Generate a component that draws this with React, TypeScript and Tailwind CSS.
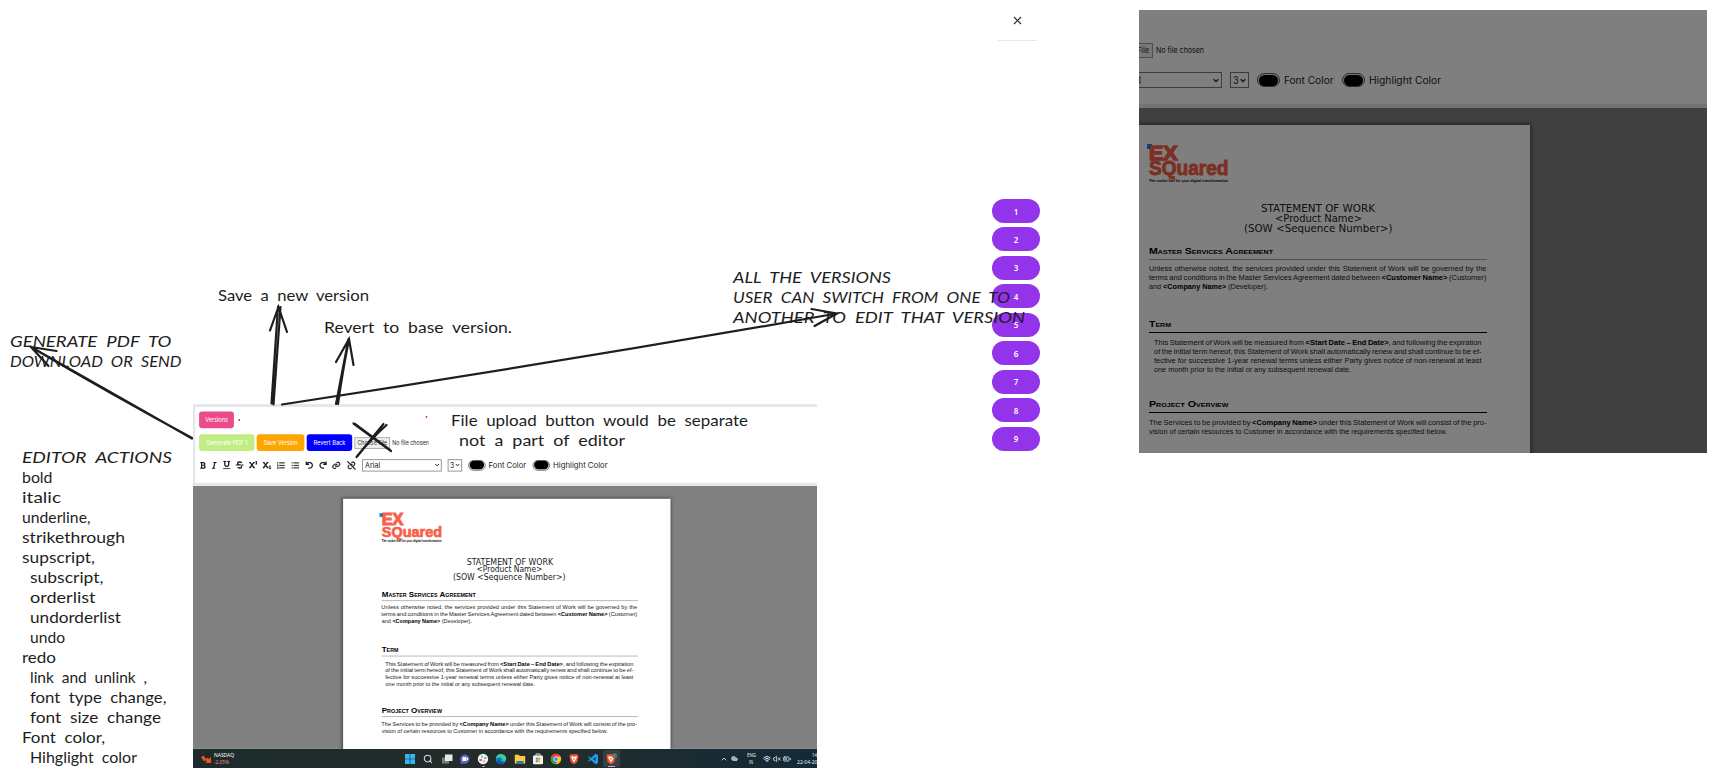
import { useLayoutEffect, useRef, type ReactNode } from "react";
import { X, Search, ChevronUp, Wifi, VolumeX, BatteryMedium, Cloud } from "lucide-react";
import {
  FaBold,
  FaItalic,
  FaUnderline,
  FaStrikethrough,
  FaSuperscript,
  FaSubscript,
} from "react-icons/fa";
import { AiOutlineOrderedList, AiOutlineUnorderedList } from "react-icons/ai";
import { BiLink, BiUnlink } from "react-icons/bi";

type FitProps = { w: number; children: ReactNode; className?: string; words?: boolean };

/* A single line of text set to an exact width, by scaling it or by spacing its words. */
function Fit({ w, children, className = "", words = false }: FitProps) {
  const ref = useRef<HTMLSpanElement>(null);
  useLayoutEffect(() => {
    const el = ref.current;
    if (!el) return;
    const natural = parseFloat(getComputedStyle(el).width);
    if (words) {
      const gaps = (el.textContent ?? "").split(" ").length - 1;
      el.style.wordSpacing = `${(w - natural) / gaps}px`;
    } else {
      el.style.transform = `scaleX(${w / natural})`;
    }
  }, [w, words]);
  return (
    <span className="block whitespace-nowrap" style={{ width: w }}>
      <span ref={ref} className={`inline-block origin-left whitespace-pre align-top ${className}`}>
        {children}
      </span>
    </span>
  );
}

function Heading({ w, children, dark }: { w: number; children: ReactNode; dark?: boolean }) {
  return (
    <div className={`h-4 w-[338px] border-b ${dark ? "border-black" : "border-[#a3a3a3]"}`}>
      <Fit w={w} className="text-[9px] leading-[14px] font-bold text-black [font-variant:small-caps]">
        {children}
      </Fit>
    </div>
  );
}

function SowPage({ dark }: { dark?: boolean }) {
  return (
    <div className="h-[400px] w-[432px] shrink-0 bg-white pt-[19px] pl-[51px] font-['Liberation_Sans',sans-serif] text-[7.5px] leading-[9.1px] text-[#222] shadow-[0_0_4px_1px_rgba(0,0,0,0.5)]">
      <div className="relative h-[59px] text-[#f8604a]">
        <div className="absolute top-0 -left-[2.5px] size-[5px] bg-[#0b84ff]" />
        <div>
          <Fit w={28.5} className="text-[21px] leading-[17px] font-bold [-webkit-text-stroke:1.5px_#f8604a]">EX</Fit>
        </div>
        <Fit w={79.5} className="-mt-[0.5px] text-[19.5px] leading-[15px] font-bold [-webkit-text-stroke:0.9px_#f8604a]">SQuared</Fit>
        <div className="pt-[2px]">
          <Fit w={79} className="text-[4.2px] leading-[6px] font-bold text-black">
            The rocket fuel for your digital transformation
          </Fit>
        </div>
      </div>
      <div className="flex w-[338px] flex-col items-center font-['DejaVu_Sans',sans-serif] text-[10.6px] leading-[10.1px] text-[#222]">
        <Fit w={114}>STATEMENT OF WORK</Fit>
        <Fit w={87}>{"<Product Name>"}</Fit>
        <Fit w={148.5}>{"(SOW <Sequence Number>)"}</Fit>
      </div>
      <div className="mt-[11px]">
        <Heading w={124}>Master Services Agreement</Heading>
      </div>
      <div className="mt-1">
        <Fit w={337.5} words>Unless otherwise noted, the services provided under this Statement of Work will be governed by the</Fit>
        <Fit w={337.5} words>
          terms and conditions in the Master Services Agreement dated between <b className="text-black">{"<Customer Name>"}</b> (Customer)
        </Fit>
        <Fit w={119}>
          and <b className="text-black">{"<Company Name>"}</b> (Developer).
        </Fit>
      </div>
      <div className="mt-[25.6px]">
        <Heading w={22} dark={dark}>Term</Heading>
      </div>
      <div className="mt-[4.5px] pl-[5px]">
        <Fit w={327.5} words>
          This Statement of Work will be measured from <b className="text-black">{"<Start Date – End Date>"}</b>, and following the expiration
        </Fit>
        <Fit w={327.5} words>of the initial term hereof, this Statement of Work shall automatically renew and shall continue to be ef-</Fit>
        <Fit w={327.5} words>fective for successive 1-year renewal terms unless either Party gives notice of non-renewal at least</Fit>
        <Fit w={197}>one month prior to the initial or any subsequent renewal date.</Fit>
      </div>
      <div className="mt-[23px]">
        <Heading w={79.5} dark={dark}>Project Overview</Heading>
      </div>
      <div className="mt-[4.5px]">
        <Fit w={337.5} words>
          The Services to be provided by <b className="text-black">{"<Company Name>"}</b> under this Statement of Work will consist of the pro-
        </Fit>
        <Fit w={298}>vision of certain resources to Customer in accordance with the requirements specified below.</Fit>
      </div>
    </div>
  );
}

function ColorPill() {
  return (
    <div className="flex h-[14px] w-[23px] items-center justify-center rounded-full border border-[#555568] bg-[#e9e9ed]">
      <div className="h-[11px] w-[19px] rounded-full bg-black" />
    </div>
  );
}

function Chevron() {
  return (
    <svg className="h-[5px] w-[6px]" viewBox="0 0 6 5" fill="none" stroke="#222" strokeWidth="1.3">
      <path d="M.7 1.2 3 3.6l2.3-2.4" />
    </svg>
  );
}

function UndoIcon({ className }: { className: string }) {
  return (
    <svg className={className} viewBox="0 0 12 12" fill="none" stroke="currentColor" strokeWidth="1.8">
      <path d="M1.5 1v4.200h4.200M1.800 5C3.200 2.500 6 1.800 8.200 2.900 10.500 4 11 7 9.400 9 8.300 10.400 6.500 10.900 4.500 10.400" />
    </svg>
  );
}

function Toolbar({ wide }: { wide?: boolean }) {
  return (
    <div
      className={`h-[108px] border-y-4 border-l-[3px] border-[#e5e7eb] bg-white pt-[6px] font-[Inter,sans-serif] text-[#1c1c28] ${wide ? "pl-[3.5px]" : "pl-[5px]"}`}
    >
      <div className="flex h-[22px]">
        <div className="flex w-[46px] items-center justify-center rounded-[4px] bg-[#ec4b8b] text-[8px] text-white">
          <Fit w={30}>Versions</Fit>
        </div>
        {!wide && (
          <>
            <div className="mt-[10px] ml-[6px] size-[2px] bg-red-600" />
            <div className="mt-[6px] ml-[245px] size-[2px] bg-red-600" />
          </>
        )}
      </div>
      <div className={`flex h-[22px] items-center text-[8px] text-white ${wide ? "mt-[7px] mb-[11px]" : "mt-2 mb-[10.5px]"}`}>
        <div className="flex h-full w-[73px] items-center justify-center rounded-[4px] bg-[#c1ee82]">
          <Fit w={55}>Generate PDF 1</Fit>
        </div>
        <div className="ml-[3px] flex h-full w-[63px] items-center justify-center rounded-[4px] bg-[#ffa500]">
          <Fit w={45}>Save Version</Fit>
        </div>
        <div className="ml-[3px] flex h-full w-[60px] items-center justify-center rounded-[4px] bg-[#0000ff]">
          <Fit w={42}>Revert Back</Fit>
        </div>
        <div className={`ml-[3px] flex h-[15px] items-center justify-center border border-[#9a9a9a] bg-[#efefef] text-[#333] ${wide ? "w-[45.5px]" : "w-[47px]"}`}>
          <Fit w={39}>Choose File</Fit>
        </div>
        <div className="ml-[3px] text-[#222]">
          <Fit w={48}>No file chosen</Fit>
        </div>
      </div>
      <div className="flex h-4 items-center text-[10px]">
        <div className="flex w-[215px] shrink-0 items-center [&>*]:shrink-0">
          <FaBold className="size-[10px]" />
          <FaItalic className="ml-[5px] size-[10px]" />
          <FaUnderline className="ml-[6px] size-[11px]" />
          <FaStrikethrough className="ml-[6px] size-[11px]" />
          <FaSuperscript className="ml-[7px] size-[11px]" />
          <FaSubscript className="ml-[7px] size-[11px]" />
          <AiOutlineOrderedList className="ml-[7px] size-[12px] stroke-current stroke-[30]" />
          <AiOutlineUnorderedList className="ml-[6.5px] size-[12px] stroke-current stroke-[30]" />
          <UndoIcon className="ml-[7px] size-[11px]" />
          <UndoIcon className="ml-[7px] size-[11px] -scale-x-100" />
          <BiLink className="ml-[5px] size-[14px] rotate-[8deg] stroke-current stroke-[0.6]" />
          <BiUnlink className="ml-[6px] size-[14px] stroke-current stroke-[0.6]" />
        </div>
        <div className="flex h-4 w-[105px] items-center justify-between border border-[#77778a] pr-[2px] pl-[3px]">
          <Fit w={20}>Arial</Fit>
          <Chevron />
        </div>
        <div className="ml-[8px] flex h-4 w-[19px] items-center justify-between border border-[#77778a] pr-[2px] pl-[2px]">
          <Fit w={5.500}>3</Fit>
          <Chevron />
        </div>
        <div className="ml-[8px] flex items-center gap-[4px]">
          <ColorPill />
          <Fit w={49.500}>Font Color</Fit>
        </div>
        <div className="ml-[8px] flex items-center gap-[4px]">
          <ColorPill />
          <Fit w={72}>Highlight Color</Fit>
        </div>
      </div>
    </div>
  );
}

function EditorScreen({ wide }: { wide?: boolean }) {
  return (
    <div className="h-[455px] w-[824px] overflow-hidden bg-[#808080]">
      <Toolbar wide={wide} />
      <div className={`pt-[17px] ${wide ? "pl-[202.5px]" : "pl-[197.5px]"}`}>
        <SowPage dark={wide} />
      </div>
    </div>
  );
}

function TaskIcon({ children }: { children: ReactNode }) {
  return (
    <svg className="size-[12px] shrink-0" viewBox="0 0 12 12">
      {children}
    </svg>
  );
}

function BraveMark() {
  return (
    <>
      <path d="M2.5 1.2h7L10.6 3 9.4 9 6 11.6 2.6 9 1.4 3z" fill="#f4502a" />
      <path d="M3.5 3.2 6 3.8l2.5-.6.3 1.6-1.300 2.200L6 9.600 4.500 7 3.200 4.800z" fill="#fff" />
      <path d="M5.300 5h1.400L6.400 7h-.8z" fill="#f4502a" />
    </>
  );
}

function Taskbar() {
  return (
    <div className="flex h-[19px] w-[624px] items-center overflow-hidden bg-linear-to-r from-[#1d2b2c] via-[#232c2a] to-[#132a37] font-['Noto_Sans',sans-serif] text-[5.5px] leading-[7px] text-white">
      <div className="flex w-[211px] items-center gap-[3px] pl-[8px]">
        <svg className="h-[8px] w-[10px]" viewBox="0 0 10 8">
          <path d="M0 2 2.500 .5 5 4l1-1.500L7.500 4 10 2v6H4.500l1.200-1.300L4.200 5 3 6.500z" fill="#f4511e" />
        </svg>
        <div>
          <Fit w={20}>NASDAQ</Fit>
          <div className="text-[#f08a8a]">
            <Fit w={15}>-2.05%</Fit>
          </div>
        </div>
      </div>
      <div className="flex items-center gap-[6.25px] [&>*]:shrink-0">
        <TaskIcon>
          <path d="M1 1h4.700v4.700H1zM6.300 1H11v4.700H6.300zM1 6.300h4.700V11H1zM6.300 6.300H11V11H6.300z" fill="#35b8f1" />
        </TaskIcon>
        <Search className="size-[12px] p-[1px] text-[#d8dcdc]" strokeWidth={2.5} />
        <TaskIcon>
          <path d="M1 4.500h7v6H1z" fill="#777d7d" />
          <path d="M4 1.500h7.500V8H4z" fill="#e8eaea" />
        </TaskIcon>
        <TaskIcon>
          <path d="M6 1.500a4.600 4.600 0 1 1-1.500 9L1.500 11l.4-2.500A4.600 4.600 0 0 1 6 1.500z" fill="#6264c8" />
          <path d="M3.500 4h3.800v4H3.500zM7.500 5.500 9 4.500v3l-1.500-1z" fill="#fff" />
        </TaskIcon>
        <div className="relative size-[12px]">
          <TaskIcon>
            <circle cx="6" cy="6" r="5.200" fill="#f3f3f3" />
            <path d="M5 2.500V5" stroke="#36c5f0" strokeWidth="1.400" />
            <path d="M9.500 5H7" stroke="#2eb67d" strokeWidth="1.400" />
            <path d="M7 9.500V7" stroke="#ecb22e" strokeWidth="1.400" />
            <path d="M2.500 7H5" stroke="#e01e5a" strokeWidth="1.400" />
          </TaskIcon>
          <div className="absolute -bottom-[2px] left-[5px] h-[1px] w-[3px] bg-[#a0a6a6]" />
        </div>
        <TaskIcon>
          <circle cx="6" cy="6" r="5.200" fill="#1683d3" />
          <path d="M1 5a5.200 5.200 0 0 1 10.200.8C11 8 8.500 8.500 7.500 7.500 8.500 5 4 3 1 5z" fill="#43cf8a" />
          <path d="M4.500 6c0 3 2.500 4 5 3.500-2 2.500-6.500 1.500-7-1.500C2.500 6.500 3.500 6 4.500 6z" fill="#0c4d9a" />
        </TaskIcon>
        <TaskIcon>
          <path d="M.8 1.800h4l1 1.200h5.400v7.500H.8z" fill="#ffc83d" />
          <path d="M2.500 10.500V8h7v2.500z" fill="#1b7cc4" />
        </TaskIcon>
        <TaskIcon>
          <path d="M4 3V1h4v2" stroke="#dfe6e6" fill="none" />
          <rect x="1" y="2.500" width="10" height="8.700" rx="1" fill="#f3f3f3" />
          <path d="M3.800 4.700h2v2h-2z" fill="#f25022" />
          <path d="M6.200 4.700h2v2h-2z" fill="#7fba00" />
          <path d="M3.800 7.200h2v2h-2z" fill="#00a4ef" />
          <path d="M6.200 7.200h2v2h-2z" fill="#ffb900" />
        </TaskIcon>
        <TaskIcon>
          <circle cx="6" cy="6" r="5.200" fill="#fbc116" />
          <path d="M1.500 3.400A5.200 5.200 0 0 1 10.500 3.400L6 3.800 4 7z" fill="#e8402f" />
          <path d="M1.500 3.400a5.200 5.200 0 0 0 4 7.800L7.500 8 4 7z" fill="#2ba24c" />
          <circle cx="6" cy="6" r="2.300" fill="#4285f4" stroke="#fff" strokeWidth=".7" />
        </TaskIcon>
        <TaskIcon>
          <BraveMark />
        </TaskIcon>
        <TaskIcon>
          <path d="M8.500.8 11 2v8l-2.500 1.200L3.800 7 2 8.500 1 8l2-2-2-2 1-.5L3.800 5zM8.500 4 6 6l2.500 2z" fill="#1f9cf0" fillRule="evenodd" />
        </TaskIcon>
        <div className="relative -ml-[2px] flex h-[17px] w-[17px] items-center justify-center rounded-[2px] bg-[#35403f]">
          <TaskIcon>
            <BraveMark />
            <circle cx="9.500" cy="2.700" r="2.500" fill="#6b6f70" />
          </TaskIcon>
          <div className="absolute bottom-0 left-[5px] h-[1px] w-[7px] bg-[#d7a3e8]" />
        </div>
      </div>
      <div className="ml-auto flex items-center text-[#e6ebeb]">
        <ChevronUp className="size-[8px]" strokeWidth={2.5} />
        <Cloud className="ml-[3px] size-[7px]" fill="#aab" />
        <div className="ml-[8px] flex w-[10px] flex-col items-center">
          <Fit w={9}>ENG</Fit>
          <Fit w={4}>IN</Fit>
        </div>
        <Wifi className="ml-[7px] size-[8px]" strokeWidth={3} />
        <VolumeX className="ml-[2px] size-[8px]" strokeWidth={2.5} />
        <BatteryMedium className="ml-[2px] size-[8px]" strokeWidth={2.5} />
        <div className="ml-[5px] flex w-[21px] flex-col items-end">
          <Fit w={5}>14</Fit>
          <Fit w={20.5}>22-04-20</Fit>
        </div>
      </div>
    </div>
  );
}

type Line = [text: string, width: number, indent?: number];

function Note({ at, lines }: { at: string; lines: Line[] }) {
  return (
    <div className={`absolute font-[Lato,sans-serif] text-[16px] leading-5 [word-spacing:4px] text-[#1e1e1e] ${at}`}>
      {lines.map(([text, width, indent = 0]) => (
        <div key={text} className={`${indent ? "pl-2" : ""} ${text === text.toUpperCase() ? "italic" : ""}`}>
          <Fit w={width}>{text}</Fit>
        </div>
      ))}
    </div>
  );
}

const EDITOR_ACTIONS: Line[] = [
  ["EDITOR ACTIONS", 150],
  ["bold", 30.5],
  ["italic", 39],
  ["underline,", 68.5],
  ["strikethrough", 103],
  ["supscript,", 73],
  ["subscript,", 73.5, 1],
  ["orderlist", 65.5, 1],
  ["undorderlist", 91, 1],
  ["undo", 35, 1],
  ["redo", 34],
  ["link and unlink ,", 117, 1],
  ["font type change,", 136.5, 1],
  ["font size change", 131, 1],
  ["Font color,", 83],
  ["Hihglight color", 107, 1],
];

export default function App() {
  return (
    <div className="relative h-[778px] w-[1716px] overflow-hidden bg-white">
      <div className="absolute top-[404px] left-[193px] h-[364px] w-[624px] overflow-hidden">
        <div className="h-[345px] w-[624px] overflow-hidden">
          <div className="origin-top-left scale-[0.758]">
            <EditorScreen />
          </div>
        </div>
        <Taskbar />
      </div>

      <div className="absolute top-[10px] left-[1139px] h-[443px] w-[568px] overflow-hidden">
        <div className="-mt-[10px] -ml-[243.5px]">
          <EditorScreen wide />
        </div>
        <div className="absolute inset-0 bg-black/50" />
      </div>

      <div className="absolute top-[10px] left-[992px] flex w-[49px] flex-col items-center">
        <div className="ml-[1px] flex h-[31px] w-[39px] justify-center border-b border-[#e5e7eb] pt-[4px]">
          <X className="size-[13px] text-[#1f2937]" strokeWidth={2} />
        </div>
        <div className="mt-[158px] -ml-[1px] flex flex-col gap-[4.45px]">
          {[1, 2, 3, 4, 5, 6, 7, 8, 9].map((n) => (
            <button
              key={n}
              className="flex h-6 w-12 items-center justify-center rounded-full bg-[#9333ea] pt-[1px] font-['Noto_Sans',sans-serif] text-[8px] font-semibold text-white"
            >
              {n}
            </button>
          ))}
        </div>
      </div>

      <Note at="top-[285px] left-[217.5px]" lines={[["Save a new version", 151]]} />
      <Note at="top-[317px] left-[324px]" lines={[["Revert to base version.", 188]]} />
      <Note at="top-[331px] left-[10px]" lines={[["GENERATE PDF TO", 161.5], ["DOWNLOAD OR SEND", 171.5]]} />
      <Note
        at="top-[267px] left-[733px]"
        lines={[
          ["ALL THE VERSIONS", 158],
          ["USER CAN SWITCH FROM ONE TO", 277],
          ["ANOTHER TO EDIT THAT VERSION", 292],
        ]}
      />
      <Note at="top-[410px] left-[450.5px]" lines={[["File upload button would be separate", 297], ["not a part of editor", 166, 1]]} />
      <Note at="top-[447px] left-[21.5px]" lines={EDITOR_ACTIONS} />

      <svg
        className="pointer-events-none absolute inset-0"
        width="1716"
        height="778"
        fill="none"
        stroke="#1e1e1e"
        strokeWidth="2.2"
        strokeLinecap="round"
      >
        <path d="M192 438.500 31 347M56.500 351 31 347l17.500 19M192 438Q110 393.500 31 347" />
        <path d="M271.500 403.500 278 306.500M273.500 404.500 280.500 307M270 330.500 278.500 307 287 332" />
        <path d="M336 404 348.500 339M338 404Q342 375 349 339M336 362 349 339l4.500 26" />
        <path d="M282 404.500Q560 362 837 313.500M811.500 309 837 313.500 814.500 326" />
        <path d="M353.500 423.500 391 451M355 424 390 450M383.500 424 356.500 457M386.500 425Q371 439 357.500 456" />
      </svg>
    </div>
  );
}
